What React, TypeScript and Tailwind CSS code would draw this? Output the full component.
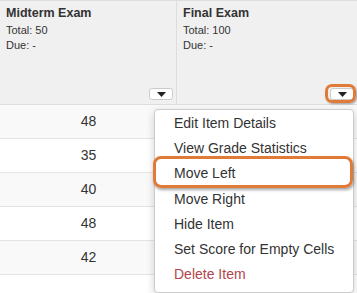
import React from "react";

const scores = [48, 35, 40, 48, 42];

const menuItems = [
  "Edit Item Details",
  "View Grade Statistics",
  "Move Left",
  "Move Right",
  "Hide Item",
  "Set Score for Empty Cells",
];

function Caret() {
  return (
    <svg width="9" height="5" viewBox="0 0 9 5">
      <polygon points="0,0 9,0 4.5,5" fill="#222" />
    </svg>
  );
}

function HeaderCell({ title, total, highlight }: { title: string; total: number; highlight?: boolean }) {
  return (
    <div className="relative h-full px-[6px] pt-[4px] text-[#333]">
      <div className="text-[12.5px] font-bold leading-[16px]">{title}</div>
      <div className="text-[11px] leading-[15px] mt-[2px]">Total: {total}</div>
      <div className="text-[11px] leading-[15px]">Due: -</div>
      <div className="absolute right-[3px] bottom-[4px] w-[24px] h-[12px] bg-white border border-[#ccc] rounded-[3px] flex items-center justify-center">
        <Caret />
      </div>
      {highlight && (
        <div className="absolute right-[1px] bottom-[1px] w-[31px] h-[19px] border-[3px] border-[#e07a36] rounded-[7px] shadow-[1px_1px_2px_rgba(0,0,0,0.35)]" />
      )}
    </div>
  );
}

export default function App() {
  return (
    <div className="relative w-[357px] h-[293px] overflow-hidden bg-white font-['Liberation_Sans',Arial,sans-serif]">
      {/* Column headers */}
      <div className="flex h-[105px] bg-[#f0f0f0] border-t border-b border-[#ddd]">
        <div className="w-[177px] border-r border-[#ddd]">
          <HeaderCell title="Midterm Exam" total={50} />
        </div>
        <div className="flex-1">
          <HeaderCell title="Final Exam" total={100} highlight />
        </div>
      </div>

      {/* Score rows */}
      {scores.map((s, i) => (
        <div
          key={i}
          className={`flex h-[34px] border-b border-[#e4e4e4] ${i % 2 === 0 ? "bg-[#f9f9f9]" : "bg-white"}`}
        >
          <div className="w-[177px] flex items-center justify-center text-[14px] text-[#333]">{s}</div>
          <div className="flex-1" />
        </div>
      ))}

      {/* Dropdown menu */}
      <div className="absolute left-[154px] top-[109px] w-[200px] h-[184px] bg-white border border-[#ccc] rounded-[4px] shadow-[0_3px_8px_rgba(0,0,0,0.18)] pt-[1px]">
        {menuItems.map(m => (
          <div key={m} className="h-[25.2px] flex items-center pl-[19px] text-[14px] text-[#333]">
            {m}
          </div>
        ))}
        <div className="h-[25.2px] flex items-center pl-[19px] text-[14px] text-[#b0464b]">Delete Item</div>
      </div>

      {/* Highlight around Move Left */}
      <div className="absolute left-[153px] top-[156px] w-[200px] h-[32px] border-[3px] border-[#e07a36] rounded-[8px] shadow-[1px_2px_3px_rgba(0,0,0,0.35)]" />
    </div>
  );
}
